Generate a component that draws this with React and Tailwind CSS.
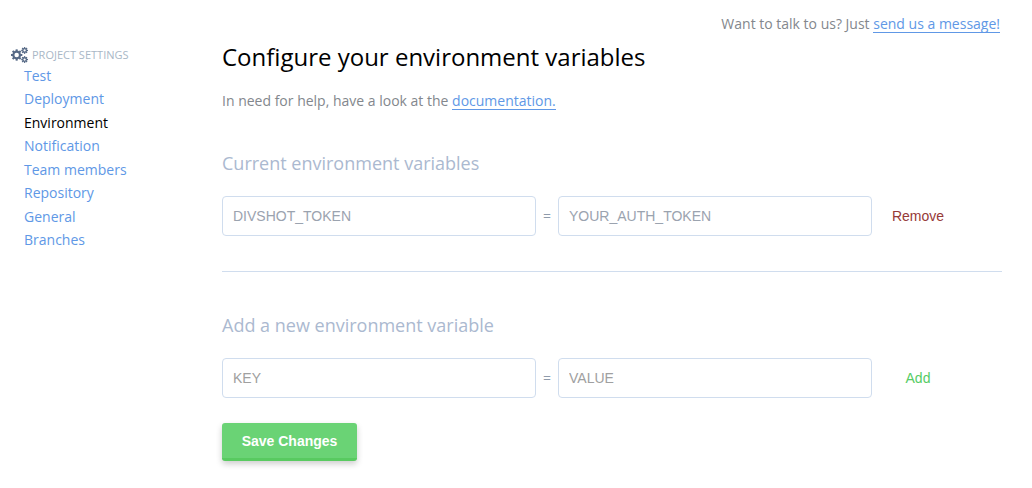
const NAV_ITEMS = [
  "Test",
  "Deployment",
  "Environment",
  "Notification",
  "Team members",
  "Repository",
  "General",
  "Branches",
];

const TOOTH_ANGLES = [0, 45, 90, 135];

function Gear({ cx, cy, outer, ring, ringWidth, tooth }) {
  return (
    <g transform={`translate(${cx} ${cy})`}>
      <circle r={ring} fill="none" stroke="currentColor" strokeWidth={ringWidth} />
      {TOOTH_ANGLES.map((angle) => (
        <g key={angle} transform={`rotate(${angle})`}>
          <rect x={-tooth / 2} y={-outer} width={tooth} height={outer - ring} fill="currentColor" />
          <rect x={-tooth / 2} y={ring} width={tooth} height={outer - ring} fill="currentColor" />
        </g>
      ))}
    </g>
  );
}

function GearsIcon() {
  return (
    <svg viewBox="0 -256 1920 1792" className="-ml-px h-4 w-[17px]" aria-hidden="true">
      <Gear cx={640} cy={640} outer={640} ring={375} ringWidth={240} tooth={230} />
      <Gear cx={1536} cy={128} outer={384} ring={205} ringWidth={150} tooth={150} />
      <Gear cx={1536} cy={1152} outer={384} ring={205} ringWidth={150} tooth={150} />
    </svg>
  );
}

function TextLink({ children }) {
  return (
    <a href="#" className="inline-block border-b border-[#6098e6] leading-4 text-[#6098e6]">
      {children}
    </a>
  );
}

function Sidebar() {
  return (
    <aside className="w-[222px] shrink-0 pt-[5px] pl-3">
      <h2 className="flex items-center gap-1 text-[11px] leading-[18px] text-[#a9b7c6]">
        <span className="text-[#576a86]">
          <GearsIcon />
        </span>
        PROJECT SETTINGS
      </h2>
      <nav aria-label="Project settings">
        <ul className="flex h-[187px] flex-col justify-between pl-3 text-sm leading-[23px]">
          {NAV_ITEMS.map((item) => (
            <li key={item}>
              <a
                href="#"
                aria-current={item === "Environment" ? "page" : undefined}
                className={item === "Environment" ? "text-black" : "text-[#6098e6]"}
              >
                {item}
              </a>
            </li>
          ))}
        </ul>
      </nav>
    </aside>
  );
}

function VariableRow({ name, value, placeholder, action, actionColor }) {
  const field =
    "h-10 w-full min-w-0 flex-1 rounded-[4px] border border-[#d0ddee] bg-white px-[10px] font-['Liberation_Sans',sans-serif] text-sm outline-none";
  const tone = placeholder ? "placeholder:text-[#a0a0a0]" : "text-[#9ba3af]";
  return (
    <div className="flex items-center">
      <input
        type="text"
        aria-label={placeholder ? "New variable key" : "Variable key"}
        defaultValue={placeholder ? undefined : name}
        placeholder={placeholder ? name : undefined}
        className={`${field} ${tone}`}
      />
      <span className="w-[22px] text-center text-sm text-[#8f9bab]">=</span>
      <input
        type="text"
        aria-label={placeholder ? "New variable value" : "Variable value"}
        defaultValue={placeholder ? undefined : value}
        placeholder={placeholder ? value : undefined}
        className={`${field} ${tone}`}
      />
      <div className="flex w-[130px] pl-[10px]">
        <button
          type="button"
          className={`w-[72px] font-['Liberation_Sans',sans-serif] text-sm ${actionColor}`}
        >
          {action}
        </button>
      </div>
    </div>
  );
}

export default function App() {
  return (
    <div className="bg-white pb-6 font-['Open_Sans',sans-serif] text-sm text-[#83878d]">
      <header className="flex justify-end pt-4 pr-8 leading-4">
        <p>
          Want to talk to us? Just <TextLink>send us a message!</TextLink>
        </p>
      </header>
      <div className="flex pt-2 pr-[30px]">
        <Sidebar />
        <main className="min-w-0 flex-1">
          <h1 className="text-2xl leading-8 text-black">Configure your environment variables</h1>
          <p className="mt-5 leading-4">
            In need for help, have a look at the <TextLink>documentation.</TextLink>
          </p>

          <section className="mt-[41px] border-b border-[#d0ddee] pb-[35px]">
            <h2 className="mb-[21px] text-lg leading-6 text-[#abb9d0]">
              Current environment variables
            </h2>
            <VariableRow
              name="DIVSHOT_TOKEN"
              value="YOUR_AUTH_TOKEN"
              action="Remove"
              actionColor="text-[#963a38]"
            />
          </section>

          <section className="mt-[41px]">
            <h2 className="mb-[21px] text-lg leading-6 text-[#abb9d0]">
              Add a new environment variable
            </h2>
            <VariableRow
              name="KEY"
              value="VALUE"
              placeholder
              action="Add"
              actionColor="text-[#56cc66]"
            />
          </section>

          <button
            type="button"
            className="mt-[25px] h-[38px] w-[135px] rounded-[3px] border-b-3 border-[#58ca60] bg-[#6ad375] font-['Liberation_Sans',sans-serif] text-sm font-bold text-white shadow-[0_3px_6px_rgba(0,0,0,0.2)]"
          >
            Save Changes
          </button>
        </main>
      </div>
    </div>
  );
}
